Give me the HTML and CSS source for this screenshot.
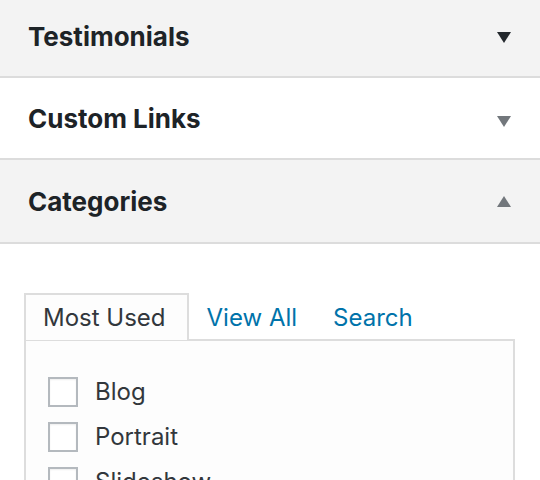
FILE: index.html
```html
<!DOCTYPE html>
<html>
<head>
<meta charset="utf-8">
<link rel="stylesheet" href="styles.css">
</head>
<body>
<div class="accordion">
  <div class="section first">
    <h3 class="title"><span>Testimonials</span><i class="arrow down dark"></i></h3>
  </div>
  <div class="section white">
    <h3 class="title"><span>Custom Links</span><i class="arrow down"></i></h3>
  </div>
  <div class="section">
    <h3 class="title tall"><span>Categories</span><i class="arrow up"></i></h3>
  </div>
  <div class="content">
    <ul class="tabs">
      <li class="tab active">Most Used</li>
      <li class="tab"><a href="#">View All</a></li>
      <li class="tab"><a href="#">Search</a></li>
    </ul>
    <div class="panel">
      <label class="item"><span class="box"></span>Blog</label>
      <label class="item"><span class="box"></span>Portrait</label>
      <label class="item"><span class="box"></span>Slideshow</label>
    </div>
  </div>
</div>
</body>
</html>
```
FILE: styles.css
```css
html, body {
  margin: 0;
  padding: 0;
  background: #fff;
  overflow: hidden;
  height: 480px;
}
body {
  font-family: Inter, "Liberation Sans", sans-serif;
  color: #23282d;
}
.section {
  background: #f3f3f3;
  border-bottom: 2px solid #dcdcdc;
}
.section.first {
  margin-top: -4px;
}
.section.white {
  background: #fff;
}
.title {
  margin: 0;
  height: 80px;
  display: flex;
  align-items: center;
  justify-content: space-between;
  padding: 0 29px 0 28px;
  font-size: 26px;
  font-weight: 700;
  color: #1d2327;
}
.title.tall {
  height: 82px;
}
.arrow {
  width: 0;
  height: 0;
  border-left: 7.5px solid transparent;
  border-right: 7.5px solid transparent;
}
.arrow.down {
  border-top: 11px solid #72777c;
  margin-top: 6px;
}
.arrow.down.dark {
  border-top-color: #23282d;
  margin-top: 2px;
}
.arrow.up {
  border-bottom: 11px solid #72777c;
}
.content {
  padding: 49px 25px 0 24px;
}
.tabs {
  list-style: none;
  margin: 0;
  padding: 0;
  display: flex;
  align-items: flex-end;
  position: relative;
  z-index: 1;
}
.tab {
  font-size: 24px;
  height: 45px;
  line-height: 46px;
  padding: 0 18px;
}
.tab a {
  color: #0073aa;
  text-decoration: none;
}
.tab.active {
  border: 2px solid #dddddd;
  border-bottom: none;
  background: #fdfdfd;
  padding: 0 21px 0 17px;
  color: #32373c;
}
.panel {
  border: 2px solid #dddddd;
  background: #fdfdfd;
  margin-top: -1px;
  padding: 28px 22px 0 22px;
  height: 300px;
}
.item {
  display: flex;
  align-items: center;
  gap: 17px;
  font-size: 24px;
  color: #32373c;
  height: 45px;
}
.box {
  width: 26px;
  height: 26px;
  border: 2px solid #b4b9be;
  background: #fff;
  box-shadow: inset 0 1px 2px rgba(0,0,0,0.07);
}
```
